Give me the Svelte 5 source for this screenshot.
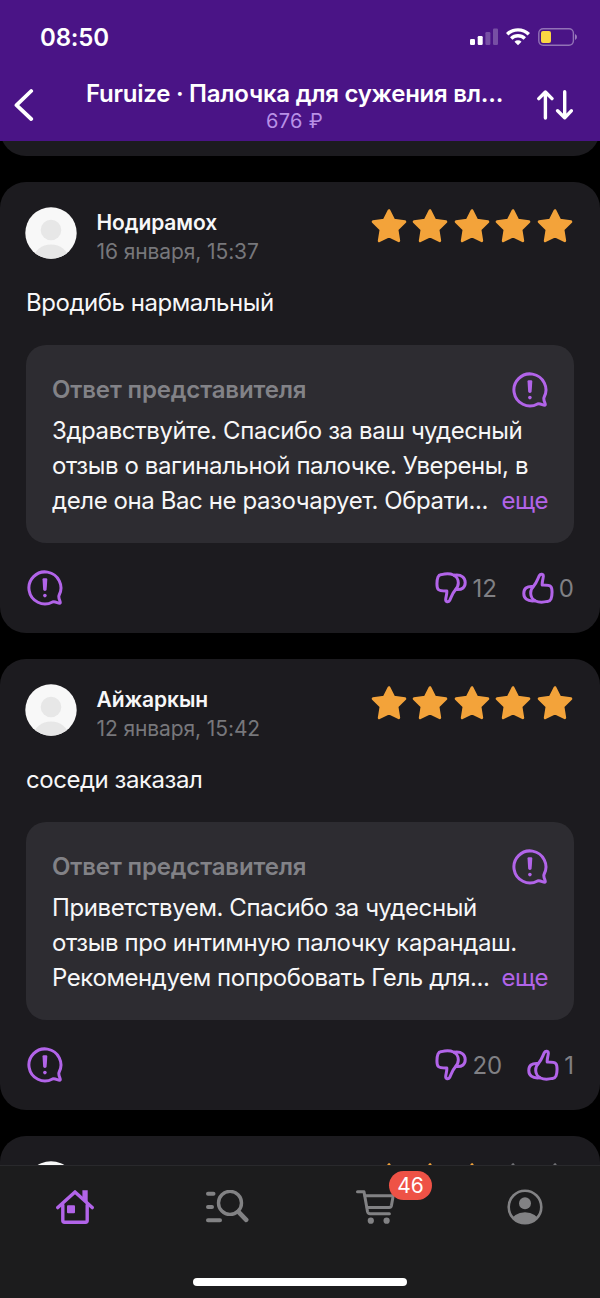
<script lang="ts">
	type Review = {
		name: string;
		date: string;
		rating: number;
		text: string;
		reply: string[];
		dislikes: number;
		likes: number;
	};

	const reviews: Review[] = [
		{
			name: 'Нодирамох',
			date: '16 января, 15:37',
			rating: 5,
			text: 'Вродибь нармальный',
			reply: [
				'Здравствуйте. Спасибо за ваш чудесный',
				'отзыв о вагинальной палочке. Уверены, в',
				'деле она Вас не разочарует. Обрати...'
			],
			dislikes: 12,
			likes: 0
		},
		{
			name: 'Айжаркын',
			date: '12 января, 15:42',
			rating: 5,
			text: 'соседи заказал',
			reply: [
				'Приветствуем. Спасибо за чудесный',
				'отзыв про интимную палочку карандаш.',
				'Рекомендуем попробовать Гель для...'
			],
			dislikes: 20,
			likes: 1
		}
	];

	const cartCount = 46;
</script>

{#snippet avatar()}
	<svg class="avatar" viewBox="0 0 52 52">
		<defs>
			<clipPath id="avatar-clip"><circle cx="26" cy="26" r="25.7" /></clipPath>
		</defs>
		<g clip-path="url(#avatar-clip)">
			<rect width="52" height="52" fill="#f8f8f8" />
			<circle cx="26" cy="23" r="10.3" fill="#e7e7e7" />
			<ellipse cx="26" cy="51" rx="17" ry="13.5" fill="#e7e7e7" />
		</g>
	</svg>
{/snippet}

{#snippet stars(rating: number)}
	<div class="stars">
		{#each [1, 2, 3, 4, 5] as n}
			<svg class="star" class:star--off={n > rating} viewBox="0 0 36 36">
				<path d="M18 2.6 L22.8 12.1 L33.9 13.7 L26 21.4 L27.8 32.8 L18 28 L8.2 32.8 L10 21.4 L2.1 13.7 L13.2 12.1 Z" />
			</svg>
		{/each}
	</div>
{/snippet}

{#snippet report()}
	<button class="report" aria-label="Пожаловаться">
		<svg width="36" height="36" viewBox="0 0 36 36">
			<path class="line" d="M32 25.5 A16 16 0 1 0 25.5 32 C28.3 31 31.4 33.8 33 33.2 C34.5 32.4 30.9 28.6 32 25.5 Z" />
			<path d="M15.5 9.5 Q15.5 8.3 16.7 8.3 H19.1 Q20.3 8.3 20.3 9.5 L19.6 19.8 Q19.5 20.9 17.9 20.9 Q16.3 20.9 16.2 19.8 Z" fill="#b264e9" />
			<circle cx="17.9" cy="25.6" r="1.8" fill="#b264e9" />
		</svg>
	</button>
{/snippet}

{#snippet thumb(up: boolean)}
	<svg class="thumb" class:thumb--up={up} viewBox="0 0 32 32">
		<path class="line" d="M6.5 2.6 C10 1.8 16 1.9 18.5 3 C21 4 23.4 7.2 23.3 11 C23.3 14.8 21.8 16.6 20 18.4 C17.5 21 16.4 25 14.6 28.5 C13.5 30.4 10.5 30.1 10.7 27.5 C10.9 24.5 12.1 22.3 11.8 19 C9 19 5 19.2 3.3 17.5 C1.3 15.5 1.8 8 3 5 C3.7 3.3 4.5 2.9 6.5 2.6 Z" />
		<path class="line" d="M19.5 3.2 C27 2.3 30.2 6 30.2 10.6 C30.2 15.2 27.5 18 21 17.5" />
	</svg>
{/snippet}

<div class="screen">
	<header class="header">
		<div class="status">
			<span class="status__time">08:50</span>
			<div class="status__icons">
				<svg width="28" height="18" viewBox="0 0 28 18" fill="#fff">
					<rect x="0" y="11" width="5" height="6" rx="1.2" />
					<rect x="7.7" y="8" width="5" height="9" rx="1.2" />
					<rect x="15.4" y="4" width="5" height="13" rx="1.2" opacity="0.25" />
					<rect x="23" y="0.4" width="5" height="16.6" rx="1.2" opacity="0.25" />
				</svg>
				<svg width="24" height="18" viewBox="0 0 24 18" fill="none" stroke="#fff" stroke-width="3.4">
					<path d="M1.2 6.3 A15.3 15.3 0 0 1 22.8 6.3" />
					<path d="M5.2 10.5 A9.7 9.7 0 0 1 18.8 10.5" />
					<path d="M12 17.2 L8.5 13.7 A5 5 0 0 1 15.5 13.7 Z" fill="#fff" stroke="none" />
				</svg>
				<svg width="40" height="18" viewBox="0 0 40 18">
					<rect x="0.8" y="0.8" width="34.6" height="16.4" rx="4.4" fill="none" stroke="#fff" stroke-opacity="0.4" stroke-width="1.4" />
					<rect x="3" y="3" width="10" height="12" rx="2" fill="#fbd643" />
					<path d="M37 6 Q39 7 39 9 Q39 11 37 12 Z" fill="#fff" fill-opacity="0.45" />
				</svg>
			</div>
		</div>
		<div class="nav">
			<button class="nav__back" aria-label="Назад">
				<svg width="20" height="34" viewBox="0 0 20 34" fill="none" stroke="#fff" stroke-width="3.8" stroke-linecap="round" stroke-linejoin="round">
					<path d="M17.2 3 L2.5 17.2 L17.2 31" />
				</svg>
			</button>
			<div class="nav__title">
				<h1>Furuize · Палочка для сужения вл...</h1>
				<p>676 ₽</p>
			</div>
			<button class="nav__sort" aria-label="Сортировка">
				<svg width="36" height="30" viewBox="0 0 36 30" fill="none" stroke="#fff" stroke-width="3.4" stroke-linecap="round" stroke-linejoin="round">
					<path d="M8.4 28 V2.2 M1.8 8.6 L8.4 2 L15 8.6" />
					<path d="M27.7 1.8 V27.6 M20.6 20.8 L27.7 27.8 L34.3 20.8" />
				</svg>
			</button>
		</div>
	</header>

	<main class="list">
		<div class="card card--tail"></div>
		{#each reviews as review}
			<article class="card">
				<div class="card__head">
					{@render avatar()}
					<div class="card__author">
						<div class="card__name">{review.name}</div>
						<div class="card__date">{review.date}</div>
					</div>
					{@render stars(review.rating)}
				</div>
				<p class="card__text">{review.text}</p>
				<div class="reply">
					<div class="reply__head">
						<span class="reply__title">Ответ представителя</span>
						{@render report()}
					</div>
					<div class="reply__body">
						{#each review.reply as line, i}
							<div class="reply__line">
								<span>{line}</span>
								{#if i === review.reply.length - 1}<span class="reply__more">еще</span>{/if}
							</div>
						{/each}
					</div>
				</div>
				<div class="card__foot">
					{@render report()}
					<div class="votes">
						<button class="vote">{@render thumb(false)}<span>{review.dislikes}</span></button>
						<button class="vote">{@render thumb(true)}<span>{review.likes}</span></button>
					</div>
				</div>
			</article>
		{/each}
		<article class="card">
			<div class="card__head">
				{@render avatar()}
				{@render stars(3)}
			</div>
		</article>
	</main>

	<footer class="tabbar">
		<nav class="tabs">
			<a class="tab" href="#home" aria-label="Главная">
				<svg width="38" height="34" viewBox="0 0 38 34" fill="none" stroke="#b264e9" stroke-width="3.4" stroke-linecap="round" stroke-linejoin="round">
					<path d="M1.8 17.6 L19 1.9 L36.2 17.6" />
					<path d="M6.8 15 V30.5 Q6.8 32.2 8.5 32.2 H29.5 Q31.2 32.2 31.2 30.5 V15" />
					<path d="M26.4 0.2 H31.7 V12.5 L26.4 8 Z" fill="#b264e9" stroke="none" />
					<rect x="11" y="15.3" width="8" height="8" rx="1" fill="#b264e9" stroke="none" />
				</svg>
			</a>
			<a class="tab tab--catalog" href="#catalog" aria-label="Каталог">
				<svg width="43" height="34" viewBox="0 0 43 34" fill="none" stroke="#828284" stroke-width="4" stroke-linecap="round">
					<path d="M2 3.8 H7.5 M2 17 H6 M2 30.2 H14" />
					<circle cx="24" cy="12.9" r="11.5" stroke-width="3.4" />
					<path d="M32.5 21.8 L40.2 29.8" stroke-width="4.6" />
				</svg>
			</a>
			<a class="tab" href="#cart" aria-label="Корзина">
				<svg width="39" height="34" viewBox="0 0 39 34" fill="none" stroke="#828284" stroke-width="3" stroke-linecap="round" stroke-linejoin="round">
					<path d="M1.5 1.7 H8 L11.5 21.5 Q12 23.7 14 23.7 H33.4" />
					<path d="M9 5.7 H37.2 L35.5 15.3 Q35 17.4 33.2 17.4 H11.2" />
					<circle cx="14.8" cy="30.7" r="3.1" fill="#828284" stroke="none" />
					<circle cx="30.6" cy="30.7" r="3.1" fill="#828284" stroke="none" />
				</svg>
				<span class="badge">{cartCount}</span>
			</a>
			<a class="tab" href="#profile" aria-label="Профиль">
				<svg width="36" height="36" viewBox="0 0 36 36">
					<defs>
						<clipPath id="user-clip"><circle cx="18" cy="18" r="16.5" /></clipPath>
					</defs>
					<circle cx="18" cy="18" r="16.3" fill="none" stroke="#828284" stroke-width="2.6" />
					<circle cx="18" cy="14.2" r="6" fill="#828284" />
					<ellipse cx="18" cy="33" rx="13.5" ry="9.8" fill="#828284" clip-path="url(#user-clip)" />
				</svg>
			</a>
		</nav>
		<div class="home-indicator"></div>
	</footer>
</div>

<style>
	:global(body) {
		background: #000;
	}

	.screen {
		width: 600px;
		height: 1298px;
		display: flex;
		flex-direction: column;
		overflow: hidden;
		background: #000;
		color: #f7f7f8;
		font-family: Inter, 'Liberation Sans', sans-serif;
		font-size: 24px;
	}

	button {
		display: flex;
		padding: 0;
		border: none;
		background: none;
		color: inherit;
		font: inherit;
	}

	h1,
	p {
		margin: 0;
	}

	svg {
		display: block;
		flex-shrink: 0;
	}

	.line {
		fill: none;
		stroke: #b264e9;
		stroke-width: 3;
		stroke-linejoin: round;
		stroke-linecap: round;
	}

	.header {
		height: 141px;
		flex-shrink: 0;
		background: #4a1486;
		color: #fff;
	}

	.status {
		height: 74px;
		box-sizing: border-box;
		padding: 0 22px 0 40px;
		display: flex;
		align-items: center;
		justify-content: space-between;
	}

	.status__time {
		font-size: 24px;
		font-weight: 600;
		letter-spacing: -0.2px;
	}

	.status__icons {
		display: flex;
		gap: 8px;
	}

	.nav {
		height: 67px;
		box-sizing: border-box;
		padding: 5px 27px 0 14px;
		display: flex;
		align-items: flex-start;
	}

	.nav__back {
		margin-top: 9px;
	}

	.nav__sort {
		margin-top: 11px;
	}

	.nav__title {
		flex: 1;
		padding-left: 18px;
		text-align: center;
		white-space: nowrap;
	}

	.nav__title h1 {
		font-size: 24px;
		line-height: 30px;
		font-weight: 600;
		letter-spacing: -0.24px;
	}

	.nav__title p {
		font-size: 20px;
		line-height: 24px;
		letter-spacing: 0.3px;
		color: #b890e6;
	}

	.list {
		flex: 1;
		min-height: 0;
		overflow: hidden;
		display: flex;
		flex-direction: column;
		gap: 26px;
	}

	.card {
		height: 451px;
		flex-shrink: 0;
		box-sizing: border-box;
		padding: 25px 26px 0;
		border-radius: 26px;
		background: #1c1b1f;
	}

	.card--tail {
		height: 60px;
		margin-top: -45px;
	}

	.card__head {
		height: 52px;
		display: flex;
		align-items: flex-start;
	}

	.avatar {
		width: 52px;
		height: 52px;
		margin-left: -1px;
	}

	.card__author {
		margin-left: 19.5px;
		white-space: nowrap;
	}

	.card__name {
		font-size: 21px;
		line-height: 31px;
		font-weight: 600;
		letter-spacing: -0.1px;
	}

	.card__date {
		font-size: 21px;
		line-height: 28px;
		letter-spacing: -0.1px;
		color: #77777b;
	}

	.stars {
		display: flex;
		gap: 5.6px;
		margin: 1px 1px 0 auto;
	}

	.star {
		width: 36px;
		height: 36px;
		fill: #f3a33a;
		stroke: #f3a33a;
		stroke-width: 2.8;
		stroke-linejoin: round;
	}

	.star--off {
		fill: #707074;
		stroke: #707074;
	}

	.card__text {
		margin-top: 26px;
		line-height: 36px;
		letter-spacing: -0.46px;
		white-space: nowrap;
	}

	.reply {
		height: 198px;
		margin-top: 24px;
		box-sizing: border-box;
		padding: 27px 26px 0;
		border-radius: 20px;
		background: #2d2c31;
	}

	.reply__head {
		height: 36px;
		display: flex;
		align-items: center;
		justify-content: space-between;
	}

	.reply__title {
		font-weight: 600;
		line-height: 28px;
		letter-spacing: -0.15px;
		color: #828287;
	}

	.reply__body {
		margin-top: 4.5px;
		letter-spacing: -0.41px;
	}

	.reply__line {
		display: flex;
		justify-content: space-between;
		line-height: 35.3px;
		white-space: nowrap;
	}

	.reply__more {
		color: #b264e9;
	}

	.card__foot {
		margin: 27px 0 0 0.5px;
		height: 36px;
		display: flex;
		align-items: center;
		justify-content: space-between;
	}

	.votes {
		display: flex;
		gap: 25px;
	}

	.vote {
		align-items: center;
		gap: 5px;
		line-height: 32px;
		color: #808084;
	}

	.vote span {
		padding-top: 1px;
	}

	.thumb {
		width: 32px;
		height: 32px;
	}

	.thumb--up {
		transform: rotate(180deg);
	}

	.tabbar {
		height: 133px;
		flex-shrink: 0;
		box-sizing: border-box;
		border-top: 1px solid #29292c;
		background: #1c1c1d;
	}

	.tabs {
		height: 81px;
		display: flex;
	}

	.tab {
		flex: 1;
		position: relative;
		display: flex;
		align-items: center;
		justify-content: center;
		text-decoration: none;
	}

	.tab--catalog {
		padding-left: 2px;
		margin-right: -2px;
	}

	.badge {
		position: absolute;
		top: 5px;
		left: 89px;
		width: 43px;
		height: 29px;
		border-radius: 15px;
		background: #ee5246;
		color: #fff;
		font-size: 21px;
		line-height: 29px;
		text-align: center;
	}

	.home-indicator {
		width: 214px;
		height: 8px;
		margin: 31px auto 0;
		border-radius: 4px;
		background: #fff;
	}
</style>
